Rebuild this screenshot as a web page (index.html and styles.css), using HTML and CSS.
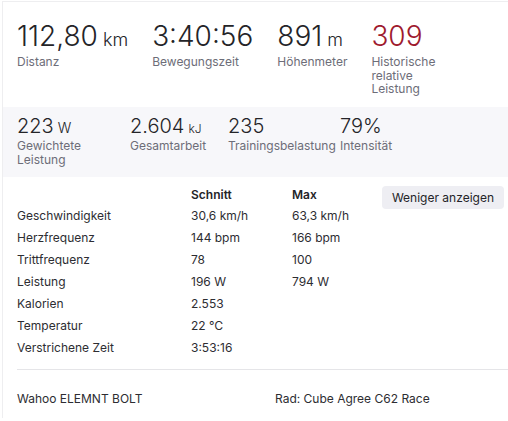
FILE: index.html
```html
<!DOCTYPE html>
<html lang="de">
<head>
    <meta charset="UTF-8">
    <meta name="viewport" content="width=device-width, initial-scale=1.0">
    <title>Aktivität – Statistiken</title>
    <link rel="stylesheet" href="styles.css">
</head>
<body>
    <section class="panel">
        <ul class="stats stats-main">
            <li class="stat">
                <strong class="wert">112,80<abbr class="einheit">km</abbr></strong>
                <span class="label">Distanz</span>
            </li>
            <li class="stat">
                <strong class="wert">3:40:56</strong>
                <span class="label">Bewegungszeit</span>
            </li>
            <li class="stat">
                <strong class="wert">891<abbr class="einheit">m</abbr></strong>
                <span class="label">Höhenmeter</span>
            </li>
            <li class="stat">
                <strong class="wert rot">309</strong>
                <span class="label">Historische relative Leistung</span>
            </li>
        </ul>

        <ul class="stats stats-extra">
            <li class="stat">
                <strong class="wert">223<abbr class="einheit">W</abbr></strong>
                <span class="label">Gewichtete Leistung</span>
            </li>
            <li class="stat">
                <strong class="wert">2.604<abbr class="einheit klein">kJ</abbr></strong>
                <span class="label">Gesamtarbeit</span>
            </li>
            <li class="stat">
                <strong class="wert">235</strong>
                <span class="label">Trainingsbelastung</span>
            </li>
            <li class="stat">
                <strong class="wert">79%</strong>
                <span class="label">Intensität</span>
            </li>
        </ul>

        <div class="details">
            <table class="tabelle">
                <thead>
                    <tr><th></th><th>Schnitt</th><th>Max</th></tr>
                </thead>
                <tbody>
                    <tr><td>Geschwindigkeit</td><td>30,6 km/h</td><td>63,3 km/h</td></tr>
                    <tr><td>Herzfrequenz</td><td>144 bpm</td><td>166 bpm</td></tr>
                    <tr><td>Trittfrequenz</td><td>78</td><td>100</td></tr>
                    <tr><td>Leistung</td><td>196 W</td><td>794 W</td></tr>
                    <tr><td>Kalorien</td><td>2.553</td><td></td></tr>
                    <tr><td>Temperatur</td><td>22 ℃</td><td></td></tr>
                    <tr><td>Verstrichene Zeit</td><td>3:53:16</td><td></td></tr>
                </tbody>
            </table>
            <button class="btn-weniger" type="button">Weniger anzeigen</button>
        </div>

        <div class="geraete">
            <span>Wahoo ELEMNT BOLT</span>
            <span>Rad: Cube Agree C62 Race</span>
        </div>
    </section>
</body>
</html>
```

FILE: styles.css
```css
body {
    margin: 0;
    background: #fff;
    font-family: 'Inter', 'Noto Sans', sans-serif;
    color: #242428;
}

.panel {
    margin: 1px 0 0 2px;
    border-top: 1px solid #eeeef0;
    border-left: 1px solid #eeeef0;
    height: 416px;
}

.stats {
    list-style: none;
    margin: 0;
    padding: 0 0 0 14px;
    display: flex;
}

.stat {
    display: flex;
    flex-direction: column;
    width: min-content;
}

.wert {
    font-weight: 300;
    white-space: nowrap;
}

.einheit {
    font-weight: 300;
    line-height: 1;
    text-decoration: none;
    margin-left: 5px;
}

.label {
    font-size: 12px;
    line-height: 13.5px;
    color: #6d6d78;
}

/* obere Reihe */
.stats-main {
    gap: 24px;
    height: 105px;
    padding-top: 17px;
    box-sizing: border-box;
}

.stats-main .wert {
    font-size: 28px;
    line-height: 34px;
}

.stats-main .einheit {
    font-size: 18px;
}

.stats-main .label {
    margin-top: 2px;
}

.rot {
    color: #9e1a2e;
}

/* graue Reihe */
.stats-extra {
    background: #f7f7fa;
    height: 70px;
    padding-top: 7px;
    box-sizing: border-box;
}

.stats-extra .stat:nth-child(1) { width: 113px; }
.stats-extra .stat:nth-child(2) { width: 98px; }
.stats-extra .stat:nth-child(3) { width: 112px; }

.stats-extra .label {
    padding-right: 24px;
    margin-top: 1px;
}

.stats-extra .wert {
    font-size: 20px;
    line-height: 24px;
}

.stats-extra .einheit {
    font-size: 14px;
    margin-left: 4px;
}

.stats-extra .einheit.klein {
    font-size: 12px;
}

/* Tabelle */
.details {
    display: flex;
    justify-content: space-between;
    align-items: flex-start;
    padding: 7px 4px 0 14px;
}

.tabelle {
    border-collapse: collapse;
    font-size: 12px;
    color: #2d2d32;
}

.tabelle th,
.tabelle td {
    padding: 0;
    height: 22px;
    text-align: left;
    vertical-align: middle;
}

.tabelle th {
    height: 20px;
    font-weight: 600;
    color: #242428;
}

.tabelle td:nth-child(1) { width: 174px; }
.tabelle td:nth-child(2) { width: 101px; }

.btn-weniger {
    margin-top: 2px;
    border: 0;
    border-radius: 4px;
    background: #eeeef3;
    color: #242428;
    font: 400 12px/23px 'Inter', sans-serif;
    padding: 0 10px;
    height: 23px;
}

/* Geräte */
.geraete {
    margin: 11px 0 0 14px;
    border-top: 1px solid #e5e5e8;
    padding-top: 18px;
    display: grid;
    grid-template-columns: 258px auto;
    font-size: 12px;
    line-height: 22px;
    color: #2d2d32;
}
```
